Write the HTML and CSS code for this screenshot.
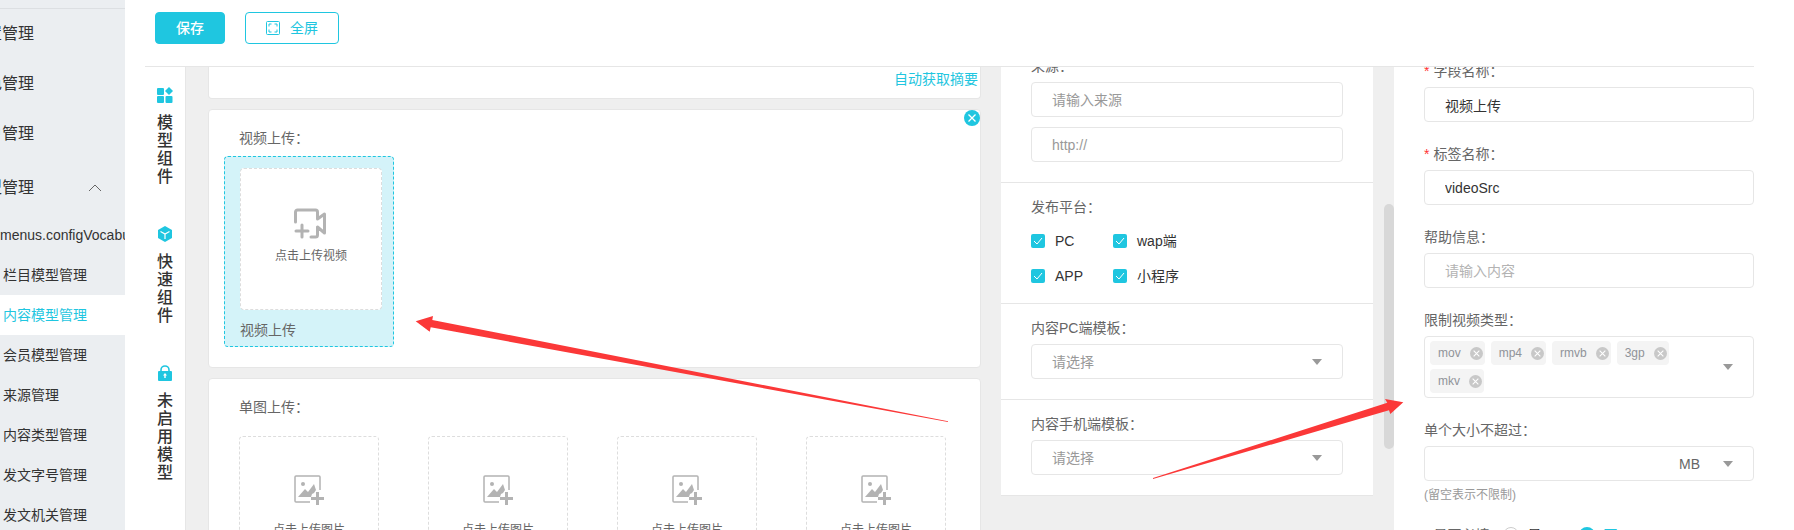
FILE: index.html
```
<!DOCTYPE html>
<html lang="zh-CN">
<head>
<meta charset="UTF-8">
<meta name="viewport" content="width=device-width, initial-scale=1">
<title>内容模型管理</title>
<link rel="stylesheet" href="styles.css">
</head>
<body>

<!-- 图标 -->
<svg class="sprite" aria-hidden="true">
  <symbol id="i-picture" viewBox="0 0 30 30">
    <path d="M26 15V2a1 1 0 0 0-1-1H2a1 1 0 0 0-1 1v24a1 1 0 0 0 1 1h14" fill="none" stroke="#b3b3b3" stroke-width="1.500"/>
    <circle cx="9" cy="9" r="2" fill="#b3b3b3"/>
    <path d="M4 22l7-8 3 3 6-8 2 6-2 3-2 1-1 3z" fill="#b3b3b3"/>
    <path d="M23.500 17v13M17 23.500h13" stroke="#b3b3b3" stroke-width="3"/>
  </symbol>
  <symbol id="i-close" viewBox="0 0 16 16">
    <circle cx="8" cy="8" r="8" fill="currentColor"/>
    <path d="M4.500 4.500l7 7M11.500 4.500l-7 7" stroke="#fff" stroke-width="1.300"/>
  </symbol>
</svg>

<div class="layout">
  <nav class="sidebar">
    <a class="menu" href="#">配置管理</a>
    <a class="menu" href="#">角色管理</a>
    <a class="menu" href="#">用户管理</a>
    <a class="menu menu-open" href="#">模型管理
      <svg width="14" height="8" viewBox="0 0 14 8"><path d="M1 7l6-6 6 6" fill="none" stroke="#666"/></svg>
    </a>
    <a class="sub sub-first" href="#">menus.configVocabulary</a>
    <a class="sub" href="#">栏目模型管理</a>
    <a class="sub active" href="#">内容模型管理</a>
    <a class="sub" href="#">会员模型管理</a>
    <a class="sub" href="#">来源管理</a>
    <a class="sub" href="#">内容类型管理</a>
    <a class="sub" href="#">发文字号管理</a>
    <a class="sub" href="#">发文机关管理</a>
  </nav>

  <main class="main">
    <header class="toolbar">
      <button type="button" class="btn btn-primary">保存</button>
      <button type="button" class="btn btn-plain">
        <svg width="14" height="14" viewBox="0 0 14 14" fill="none" stroke="currentColor"><rect x=".5" y=".5" width="13" height="13" rx="1"/><path d="M3 5.500V3h2.500M8.500 3H11v2.500M11 8.500V11H8.500M5.500 11H3V8.500"/></svg>
        全屏
      </button>
    </header>

    <div class="workspace">
      <aside class="rail">
        <button type="button" class="rail-item">
          <svg width="16" height="16" viewBox="0 0 16 16" fill="#1fc6e0"><rect y="1" width="7" height="7" rx="1"/><rect y="9" width="7" height="7" rx="1"/><rect x="8.500" y="9" width="7" height="7" rx="1"/><path d="M12 0l4 4-4 4-4-4z"/></svg>
          <span>模型组件</span>
        </button>
        <button type="button" class="rail-item">
          <svg width="16" height="16" viewBox="0 0 16 16"><path d="M8 0l7 4v8l-7 4-7-4V4z" fill="#1fc6e0"/><path d="M3.500 5.500L8 8l4.500-2.500M8 8v5" fill="none" stroke="#fff" stroke-width="1.200"/></svg>
          <span>快速组件</span>
        </button>
        <button type="button" class="rail-item">
          <svg width="16" height="16" viewBox="0 0 16 16"><path d="M4 7V5a4 4 0 0 1 8 0v2" fill="none" stroke="#1fc6e0" stroke-width="1.600"/><rect x="1" y="6" width="14" height="10" rx="1" fill="#1fc6e0"/><path d="M8 8l2 2.500H8.700V13H7.300v-2.500H6z" fill="#fff"/></svg>
          <span>未启用模型</span>
        </button>
      </aside>

      <div class="canvas">
        <div class="fields">
          <section class="card card-summary">
            <a href="#">自动获取摘要</a>
          </section>

          <section class="card card-video">
            <button type="button" class="remove" aria-label="删除"><svg width="16" height="16"><use href="#i-close"/></svg></button>
            <h3>视频上传：</h3>
            <div class="selected">
              <button type="button" class="upload">
                <svg width="34" height="32" viewBox="0 0 34 32" fill="none" stroke="#b3b3b3" stroke-width="3" stroke-linecap="round" stroke-linejoin="round"><path d="M1.500 14V4a2 2 0 0 1 2-2h18a2 2 0 0 1 2 2v7l7-5v19l-7-6v8a2 2 0 0 1-2 2H17"/><path d="M8 17v12M2 23h12"/></svg>
                点击上传视频
              </button>
              <p>视频上传</p>
            </div>
          </section>

          <section class="card card-images">
            <h3>单图上传：</h3>
            <div class="images">
              <button type="button" class="upload upload-img"><svg width="30" height="30"><use href="#i-picture"/></svg>点击上传图片</button>
              <button type="button" class="upload upload-img"><svg width="30" height="30"><use href="#i-picture"/></svg>点击上传图片</button>
              <button type="button" class="upload upload-img"><svg width="30" height="30"><use href="#i-picture"/></svg>点击上传图片</button>
              <button type="button" class="upload upload-img"><svg width="30" height="30"><use href="#i-picture"/></svg>点击上传图片</button>
            </div>
          </section>
        </div>

        <div class="publish">
          <section class="block">
            <label class="label" for="source">来源：</label>
            <input id="source" class="input" type="text" placeholder="请输入来源">
            <input class="input" type="text" placeholder="http://" aria-label="来源地址">
          </section>
          <section class="block">
            <div class="label">发布平台：</div>
            <div class="checks">
              <label><input type="checkbox" checked>PC</label>
              <label><input type="checkbox" checked>wap端</label>
              <label><input type="checkbox" checked>APP</label>
              <label><input type="checkbox" checked>小程序</label>
            </div>
          </section>
          <section class="block">
            <label class="label" for="tpl-pc">内容PC端模板：</label>
            <select id="tpl-pc" class="input select"><option>请选择</option></select>
          </section>
          <section class="block">
            <label class="label" for="tpl-mobile">内容手机端模板：</label>
            <select id="tpl-mobile" class="input select"><option>请选择</option></select>
          </section>
        </div>

        <div class="scrollbar"><div class="thumb"></div></div>
      </div>

      <form class="props">
        <div class="item">
          <label class="label required" for="field-name">字段名称：</label>
          <input id="field-name" class="input" type="text" value="视频上传">
        </div>
        <div class="item">
          <label class="label required" for="tag-name">标签名称：</label>
          <input id="tag-name" class="input" type="text" value="videoSrc">
        </div>
        <div class="item">
          <label class="label" for="help">帮助信息：</label>
          <input id="help" class="input light" type="text" placeholder="请输入内容">
        </div>
        <div class="item">
          <div class="label">限制视频类型：</div>
          <div class="tags-box">
            <div class="tags">
              <span class="tag">mov<button type="button" aria-label="移除 mov"><svg width="13" height="13"><use href="#i-close"/></svg></button></span>
              <span class="tag">mp4<button type="button" aria-label="移除 mp4"><svg width="13" height="13"><use href="#i-close"/></svg></button></span>
              <span class="tag">rmvb<button type="button" aria-label="移除 rmvb"><svg width="13" height="13"><use href="#i-close"/></svg></button></span>
              <span class="tag">3gp<button type="button" aria-label="移除 3gp"><svg width="13" height="13"><use href="#i-close"/></svg></button></span>
              <span class="tag">mkv<button type="button" aria-label="移除 mkv"><svg width="13" height="13"><use href="#i-close"/></svg></button></span>
            </div>
            <svg class="caret" width="10" height="6" viewBox="0 0 10 6"><path d="M0 0h10L5 6z" fill="#999"/></svg>
          </div>
        </div>
        <div class="item">
          <label class="label" for="max-size">单个大小不超过：</label>
          <div class="size">
            <input id="max-size" type="text">
            <select aria-label="单位"><option>MB</option></select>
          </div>
          <p class="hint">(留空表示不限制)</p>
        </div>
        <div class="radios">
          <span class="label required">是否必填：</span>
          <label><input type="radio" name="required">是</label>
          <label><input type="radio" name="required" checked>否</label>
        </div>
      </form>
    </div>
  </main>
</div>

<!-- 标注箭头 -->
<svg class="marks" aria-hidden="true" width="1794" height="530" viewBox="0 0 1794 530" fill="#fb3838">
  <path d="M415.700 321.300L433 316l-.7 4L948 421.300v.7L430.700 327.300l-1 4.400z"/>
  <path d="M1403.300 402.300L1385 399l2.300 3.700L1153 478v1L1389 410.300l1.300 3.700z"/>
</svg>

</body>
</html>
```
FILE: styles.css
```
* {
  box-sizing: border-box;
}
body {
  margin: 0;
  height: 100vh;
  overflow: hidden;
  background: #fff;
  color: #333;
  font: 14px/20px "Liberation Sans", "Noto Sans CJK SC", sans-serif;
}
a {
  color: inherit;
  text-decoration: none;
}
h3, p {
  margin: 0;
  font-size: 14px;
  font-weight: 400;
}
button, input, select {
  margin: 0;
  padding: 0;
  border: 0;
  background: none;
  color: inherit;
  font: inherit;
}
button {
  cursor: pointer;
}
svg {
  display: block;
  flex: none;
}
.sprite {
  position: absolute;
  width: 0;
  height: 0;
}
.layout {
  display: flex;
  height: 100%;
}

/* 左侧菜单 */
.sidebar {
  flex: none;
  width: 125px;
  margin-top: 8px;
  border-top: 1px solid #dcdfe2;
  background: #ebeef1;
  box-shadow: 0 -8px #ebeef1;
  overflow: hidden;
  white-space: nowrap;
}
.menu {
  display: flex;
  align-items: center;
  justify-content: space-between;
  height: 50px;
  margin-left: -30px;
  padding-right: 23px;
  font-size: 16px;
}
.menu-open {
  height: 58px;
}
.sub {
  display: block;
  height: 40px;
  padding-left: 3px;
  line-height: 40px;
}
.sub-first {
  height: 38px;
  padding-left: 0;
  line-height: 36px;
}
.sub.active {
  background: #fff;
  color: #1fc6e0;
}

/* 顶部按钮 */
.main {
  display: flex;
  flex: 1;
  flex-direction: column;
  min-width: 0;
  padding: 0 40px 0 20px;
}
.toolbar {
  display: flex;
  flex: none;
  gap: 20px;
  height: 67px;
  padding: 12px 10px;
  border-bottom: 1px solid #e6e6e6;
}
.btn {
  display: flex;
  align-items: center;
  justify-content: center;
  gap: 10px;
  height: 32px;
  padding: 0 20px;
  border: 1px solid #1fc6e0;
  border-radius: 4px;
  color: #1fc6e0;
}
.btn-primary {
  background: #1fc6e0;
  color: #fff;
  font-weight: 500;
}

/* 工作区 */
.workspace {
  display: flex;
  flex: 1;
  min-height: 0;
  overflow: hidden;
}
.rail {
  display: flex;
  flex: none;
  flex-direction: column;
  gap: 40px;
  width: 41px;
  padding-top: 20px;
  border-right: 1px solid #e6e6e6;
}
.rail-item {
  display: flex;
  flex-direction: column;
  align-items: center;
  gap: 11px;
  font-size: 16px;
  font-weight: 500;
  line-height: 18px;
}
.rail-item span {
  width: 16px;
}
.canvas {
  display: flex;
  flex: 1;
  min-width: 0;
  padding-left: 22px;
  background: #efefef;
}
.fields {
  display: flex;
  flex: 1;
  flex-direction: column;
  gap: 10px;
  min-width: 0;
  margin-right: 20px;
}
.card {
  position: relative;
  flex: none;
  padding: 18px 30px;
  border: 1px solid #e6e6e6;
  border-radius: 4px;
  background: #fff;
  color: #666;
}
.card-summary {
  height: 32px;
  padding: 2px 2px 0;
  border-top: 0;
  border-radius: 0 0 4px 4px;
  color: #1fc6e0;
  text-align: right;
}
.card-video {
  height: 259px;
}
.card-images {
  height: 240px;
}
.remove {
  position: absolute;
  top: 0;
  right: 0;
  color: #1fc6e0;
}
.selected {
  width: 170px;
  margin: 8px 0 0 -15px;
  padding: 11px 13px 6px 15px;
  border: 1px dashed #1fc6e0;
  border-radius: 4px;
  background: #d4f3f9;
}
.selected p {
  margin-top: 10px;
}
.upload {
  display: flex;
  flex-direction: column;
  align-items: center;
  gap: 6px;
  width: 142px;
  height: 142px;
  padding-top: 39px;
  border: 1px dashed #ddd;
  border-radius: 4px;
  background: #fff;
  font-size: 12px;
}
.images {
  display: grid;
  grid-template-columns: repeat(4, 140px);
  justify-content: space-between;
  margin: 19px 4px 0 0;
}
.upload-img {
  gap: 15px;
  width: 140px;
  height: 140px;
  padding-top: 38px;
}

/* 发布设置 */
.publish {
  flex: none;
  align-self: flex-start;
  width: 372px;
  margin-top: -11px;
  background: #fff;
}
.block {
  padding: 14px 30px 20px;
  border-bottom: 1px solid #e6e6e6;
}
.block:first-child {
  padding-top: 0;
}
.label {
  display: block;
  margin-bottom: 6px;
  color: #666;
}
.required::before {
  content: "*";
  margin-right: 4px;
  color: #f33;
}
.input {
  display: block;
  width: 100%;
  height: 35px;
  padding: 0 20px;
  border: 1px solid #e6e6e6;
  border-radius: 4px;
  background: #fff;
}
.input + .input {
  margin-top: 10px;
}
.input::placeholder {
  color: #999;
  opacity: 1;
}
.light::placeholder {
  color: #b3b3b3;
}
select {
  appearance: none;
}
.select, .size select {
  background: url("data:image/svg+xml,%3Csvg xmlns='http://www.w3.org/2000/svg' width='10' height='6'%3E%3Cpath d='M0 0h10L5 6z' fill='%23999'/%3E%3C/svg%3E") no-repeat right 20px center;
  color: #999;
}
.checks {
  display: grid;
  grid-template-columns: 82px 1fr;
  margin-bottom: -10px;
}
.checks label {
  display: flex;
  align-items: center;
  gap: 10px;
  height: 35px;
}
.checks input {
  width: 14px;
  height: 14px;
  appearance: none;
  border-radius: 2px;
  background: #1fc6e0 url("data:image/svg+xml,%3Csvg xmlns='http://www.w3.org/2000/svg' width='14' height='14'%3E%3Cpath d='M3 7l3 3 5-6' fill='none' stroke='%23fff'/%3E%3C/svg%3E");
}
.scrollbar {
  flex: none;
  width: 10px;
  margin-left: 11px;
}
.thumb {
  height: 245px;
  margin-top: 137px;
  border-radius: 5px;
  background: #d8d8d8;
}

/* 字段属性 */
.props {
  flex: none;
  width: 360px;
  margin-top: -6px;
  padding-left: 30px;
}
.item {
  margin-bottom: 22px;
}
.tags-box {
  display: flex;
  align-items: center;
  justify-content: space-between;
  padding: 4px 20px 4px 5px;
  border: 1px solid #e6e6e6;
  border-radius: 4px;
}
.tags {
  display: flex;
  flex-wrap: wrap;
  gap: 4px 6px;
  width: 270px;
}
.tag {
  display: flex;
  align-items: center;
  gap: 9px;
  height: 24px;
  padding: 0 2px 0 8px;
  border-radius: 4px;
  background: #f4f4f4;
  color: #909399;
  font-size: 12px;
}
.tag button {
  color: #c8c8c8;
}
.size {
  display: flex;
  height: 35px;
  border: 1px solid #e6e6e6;
  border-radius: 4px;
}
.size input {
  flex: 1;
  min-width: 0;
  padding: 0 20px;
}
.size select {
  width: 94px;
  padding-left: 20px;
  color: #666;
}
.hint {
  margin-top: 6px;
  color: #999;
  font-size: 12px;
  line-height: 16px;
}
.radios {
  display: flex;
  align-items: center;
}
.radios .label {
  margin: 0;
}
.radios label {
  display: flex;
  align-items: center;
  gap: 8px;
}
.radios label + label {
  margin-left: 38px;
}
.radios input {
  width: 16px;
  height: 16px;
  appearance: none;
  border: 1px solid #ccc;
  border-radius: 50%;
}
.radios input:checked {
  border: 5px solid #1fc6e0;
}
.radios label:has(:checked) {
  color: #1fc6e0;
}

/* 箭头覆盖在页面之上 */
.marks {
  position: absolute;
  top: 0;
  left: 0;
  pointer-events: none;
}
```
